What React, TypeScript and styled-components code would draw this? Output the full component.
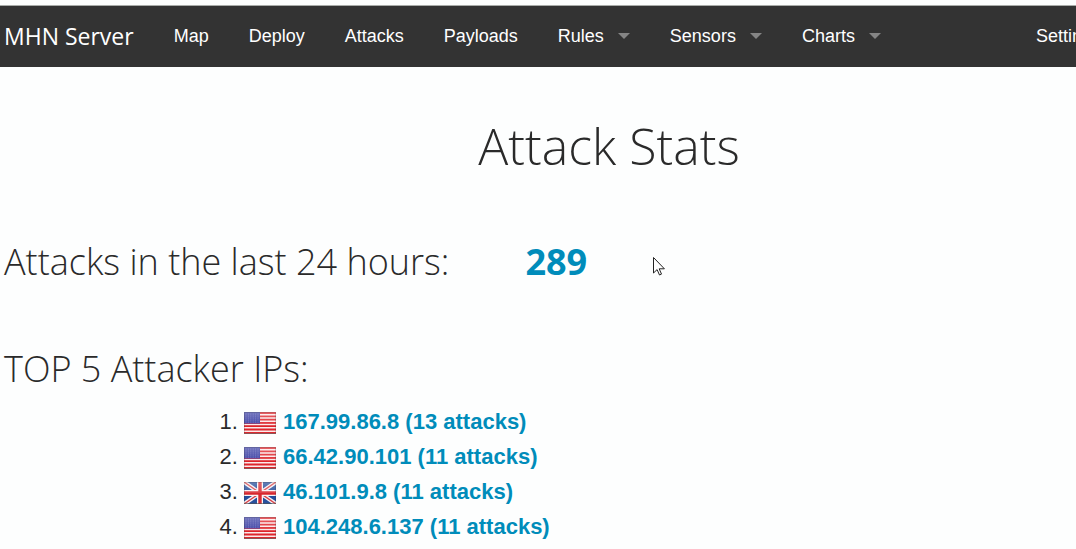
import React from "react";
import styled, { createGlobalStyle } from "styled-components";

const GlobalStyle = createGlobalStyle`
  *, *::before, *::after { box-sizing: border-box; }
  body {
    margin: 0;
    background: #fdfefe;
    color: #2a2a2a;
    font-family: "Liberation Sans", Arial, sans-serif;
    overflow: hidden;
  }
`;

const Viewport = styled.div`
  overflow: hidden;
  padding-top: 5px;
`;

/* The page is wider than the window and runs off its right edge. */
const Page = styled.div`
  width: calc(100% + 142px);
`;

const TopBar = styled.nav`
  display: flex;
  align-items: center;
  height: 62px;
  padding: 0 117px 2px 4px;
  background: #333;
  border-top: 1px solid #a9aca9;
`;

const Brand = styled.a`
  margin-right: 20px;
  color: #fff;
  font: 400 23px/58px "Open Sans", sans-serif;
  text-decoration: none;
`;

const Menu = styled.ul`
  display: flex;
  margin: 0;
  padding: 0;
  list-style: none;

  &:last-child { margin-left: auto; }
`;

const MenuLink = styled.a`
  display: flex;
  align-items: center;
  gap: 14px;
  padding: 0 20px;
  color: #fff;
  font-size: 18px;
  line-height: 58px;
  text-decoration: none;
`;

const EndLink = styled(MenuLink)`
  padding: 0;
`;

const Caret = styled.span`
  border: 6px solid transparent;
  border-top-color: #858585;
  border-bottom-width: 0;
`;

const Title = styled.h1`
  margin: 44px 0 0;
  font: 300 50px/70px "Open Sans", sans-serif;
  text-align: center;
`;

const Section = styled.section`
  padding-left: 4px;
`;

const Heading = styled.h2`
  margin: 0;
  font: 300 36px/50px "Open Sans", sans-serif;
`;

const CountHeading = styled(Heading)`
  display: flex;
  gap: 76px;
  margin: 56px 0 57px;
`;

const Count = styled.strong`
  color: #008cba;
  font-weight: 700;
`;

const Attackers = styled.ol`
  margin: 10px 0 0;
  padding-left: 240px;
  font-size: 22px;
  line-height: 35px;
`;

const AttackerLink = styled.a`
  color: #008cba;
  font-weight: 700;
  text-decoration: none;
`;

const Flag = styled.svg`
  width: 32px;
  height: 22px;
  margin-right: 7px;
  vertical-align: -5px;
`;

const Pointer = styled.svg`
  position: absolute;
  left: 653px;
  top: 257px;
  width: 12px;
  height: 19px;
`;

function Shine() {
  return (
    <>
      <rect width="32" height="22" fill="url(#shine)" />
      <rect x=".5" y=".5" width="31" height="21" fill="none" stroke="#333" strokeOpacity=".2" />
      <path d="M0 21.5h32" stroke="#555" strokeOpacity=".5" />
    </>
  );
}

function UsFlag() {
  const stars = [];
  for (let r = 0; r < 5; r++)
    for (let c = 0; c < 6; c++)
      stars.push(<rect key={`${r}-${c}`} x={1.5 + c * 2.4} y={1.6 + r * 2} width="1" height="1" />);
  return (
    <Flag viewBox="0 0 32 22" role="img" aria-label="United States">
      <rect width="32" height="22" fill="#fbeaea" />
      <path
        d="M0 1h32M0 4.3h32M0 7.6h32M0 10.9h32M0 14.2h32M0 17.5h32M0 20.8h32"
        stroke="#dd1f26"
        strokeWidth="1.8"
      />
      <rect width="16" height="11.5" fill="#3438a0" />
      <g fill="#b8bbe8" opacity=".4">{stars}</g>
      <Shine />
    </Flag>
  );
}

function UkFlag() {
  return (
    <Flag viewBox="0 0 32 22" role="img" aria-label="United Kingdom">
      <rect width="32" height="22" fill="#1f4998" />
      <path d="M0 0l32 22M32 0L0 22" stroke="#f5f1f4" strokeWidth="4" />
      <path d="M0 0l32 22M32 0L0 22" stroke="#d53a40" strokeWidth="1.4" />
      <path d="M16 0v22M0 11h32" stroke="#f8f4f5" strokeWidth="6" />
      <path d="M16 0v22M0 11h32" stroke="#d7262d" strokeWidth="3.4" />
      <Shine />
    </Flag>
  );
}

const links = [
  { label: "Map" },
  { label: "Deploy" },
  { label: "Attacks" },
  { label: "Payloads" },
  { label: "Rules", menu: true },
  { label: "Sensors", menu: true },
  { label: "Charts", menu: true },
];

const attackers = [
  { ip: "167.99.86.8", attacks: 13, flag: UsFlag },
  { ip: "66.42.90.101", attacks: 11, flag: UsFlag },
  { ip: "46.101.9.8", attacks: 11, flag: UkFlag },
  { ip: "104.248.6.137", attacks: 11, flag: UsFlag },
];

export default function App() {
  return (
    <Viewport>
      <GlobalStyle />
      <svg width="0" height="0" style={{ position: "absolute" }} aria-hidden="true">
        <defs>
          <linearGradient id="shine" x2="0" y2="1">
            <stop offset="0" stopColor="#fff" stopOpacity=".3" />
            <stop offset=".5" stopColor="#fff" stopOpacity=".12" />
            <stop offset=".52" stopColor="#fff" stopOpacity="0" />
            <stop offset="1" stopColor="#fff" stopOpacity=".05" />
          </linearGradient>
        </defs>
      </svg>
      <Page>
        <TopBar>
          <Brand href="#">MHN Server</Brand>
          <Menu>
            {links.map(({ label, menu }) => (
              <li key={label}>
                <MenuLink href="#">
                  {label}
                  {menu && <Caret />}
                </MenuLink>
              </li>
            ))}
          </Menu>
          <Menu>
            <li>
              <EndLink href="#">Settings</EndLink>
            </li>
          </Menu>
        </TopBar>
        <main>
          <Title>Attack Stats</Title>
          <Section>
            <CountHeading>
              Attacks in the last 24 hours: <Count>289</Count>
            </CountHeading>
          </Section>
          <Section>
            <Heading>TOP 5 Attacker IPs:</Heading>
            <Attackers>
              {attackers.map(({ ip, attacks, flag: Country }) => (
                <li key={ip}>
                  <Country />
                  <AttackerLink href="#">
                    {ip} ({attacks} attacks)
                  </AttackerLink>
                </li>
              ))}
            </Attackers>
          </Section>
        </main>
      </Page>
      <Pointer viewBox="0 0 12 19" aria-hidden="true">
        <path d="M.5.5v15.5l3.6-3.4 2.4 5.4 2-.9-2.3-5.3h5.2z" fill="#fff" stroke="#222" />
      </Pointer>
    </Viewport>
  );
}
